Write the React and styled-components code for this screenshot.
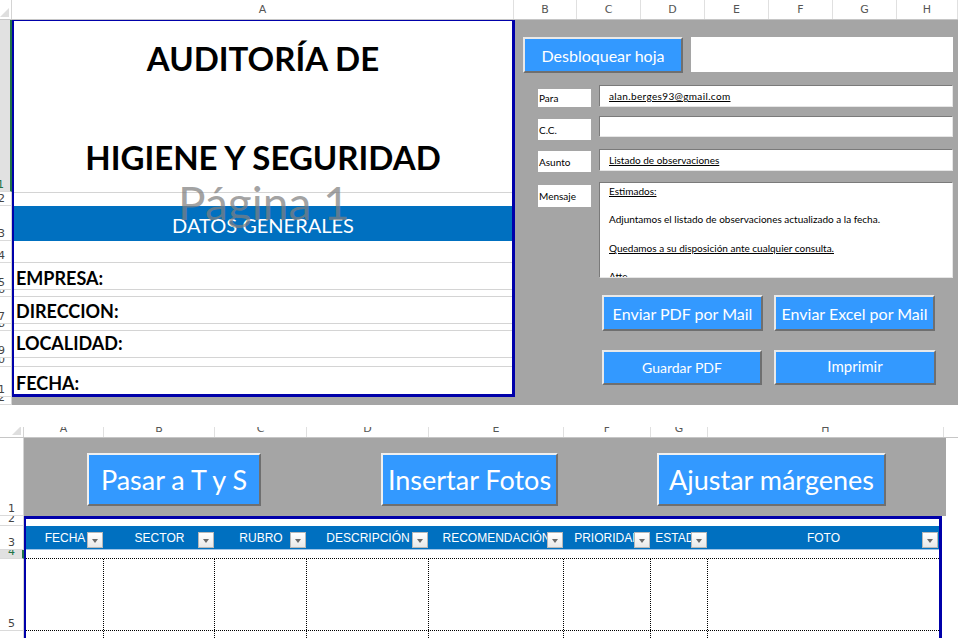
import React from "react";
import styled, { createGlobalStyle } from "styled-components";

const GlobalStyle = createGlobalStyle`
  html, body {
    margin: 0;
    padding: 0;
    background: #fff;
  }
  body {
    font-family: "Lato", "Open Sans", sans-serif;
  }
  * {
    box-sizing: border-box;
  }
`;

const EDGE = "#0000aa";
const GREY = "#a5a5a5";
const HEAD_BLUE = "#0070c0";
const BTN_BLUE = "#3399ff";

const topCols = [
  { l: "A", w: 502 },
  { l: "B", w: 63 },
  { l: "C", w: 64 },
  { l: "D", w: 64 },
  { l: "E", w: 64 },
  { l: "F", w: 64 },
  { l: "G", w: 64 },
  { l: "H", w: 61 },
];

const topRows = [
  { n: "1", h: 172, sel: true },
  { n: "2", h: 14 },
  { n: "3", h: 35 },
  { n: "4", h: 22 },
  { n: "5", h: 27 },
  { n: "6", h: 7 },
  { n: "7", h: 27 },
  { n: "8", h: 7 },
  { n: "9", h: 27 },
  { n: "10", h: 9 },
  { n: "11", h: 30 },
  { n: "12", h: 8 },
];

const dataRows = [
  { h: 22 },
  { h: 27, label: "EMPRESA:", pb: 2 },
  { h: 7 },
  { h: 27, label: "DIRECCION:", pb: 3 },
  { h: 7 },
  { h: 27, label: "LOCALIDAD:", pb: 5 },
  { h: 9 },
  { h: 26, label: "FECHA:", pb: 1, last: true },
];

// mail form: row offset from previous row, label offset inside row
const mailRows = [
  { label: "Para", mt: 0, lmt: 4, lh: 18, fh: 22, text: "alan.berges93@gmail.com", ls: 0.35 },
  { label: "C.C.", mt: 9, lmt: 3, lh: 21, fh: 21 },
  { label: "Asunto", mt: 9, lmt: 2, lh: 21, fh: 22, text: "Listado de observaciones" },
];

const bottomCols = [
  { l: "A", w: 80 },
  { l: "B", w: 111 },
  { l: "C", w: 92 },
  { l: "D", w: 122 },
  { l: "E", w: 135 },
  { l: "F", w: 87 },
  { l: "G", w: 57 },
  { l: "H", w: 236 },
];

const tableCols = [
  { t: "FECHA", w: 78 },
  { t: "SECTOR", w: 111 },
  { t: "RUBRO", w: 92 },
  { t: "DESCRIPCIÓN", w: 122 },
  { t: "RECOMENDACIÓN", w: 135 },
  { t: "PRIORIDAD", w: 87 },
  { t: "ESTADO", w: 57 },
  { t: "FOTO", w: 231 },
];

const bottomRows = [
  { n: "1", h: 78 },
  { n: "2", h: 10 },
  { n: "3", h: 24 },
  { n: "4", h: 9, sel: true },
  { n: "5", h: 72 },
  { n: "6", h: 30 },
];

const Page = styled.div`
  width: 958px;
  height: 638px;
  overflow: hidden;
  background: #fff;
  display: flex;
  flex-direction: column;
`;

const Sheet = styled.div`
  display: flex;
  flex-direction: column;
  flex-shrink: 0;
`;

const ColHeads = styled.div`
  display: flex;
  height: ${(p) => p.$h}px;
  background: #fff;
  border-bottom: 1px solid #c6c6c6;
  overflow: hidden;
  flex-shrink: 0;
`;

const Corner = styled.div`
  width: ${(p) => p.$w}px;
  flex-shrink: 0;
  position: relative;
  border-right: 1px solid #d4d4d4;
  &::after {
    content: "";
    position: absolute;
    right: 2px;
    bottom: 2px;
    border-left: 9px solid transparent;
    border-bottom: 9px solid #dedede;
  }
`;

const ColHead = styled.div`
  width: ${(p) => p.$w}px;
  flex-shrink: 0;
  border-right: 1px solid #e0e0e0;
  font-family: "DejaVu Sans", sans-serif;
  font-size: 11px;
  color: #555;
  text-align: center;
  line-height: ${(p) => p.$lh}px;
  margin-top: ${(p) => p.$mt || 0}px;
`;

const Body = styled.div`
  display: flex;
  height: ${(p) => p.$h}px;
  flex-shrink: 0;
  overflow: hidden;
`;

const RowHeads = styled.div`
  width: ${(p) => p.$w}px;
  flex-shrink: 0;
  display: flex;
  flex-direction: column;
  background: #fff;
`;

const RowHead = styled.div`
  height: ${(p) => p.$h}px;
  flex-shrink: 0;
  overflow: hidden;
  display: flex;
  align-items: flex-end;
  justify-content: ${(p) => (p.$left ? "flex-start" : "flex-end")};
  padding: ${(p) => (p.$left ? "0 0 0 8px" : "0 6px 0 0")};
  font-family: "DejaVu Sans", sans-serif;
  font-size: 11px;
  line-height: 13px;
  white-space: nowrap;
  color: ${(p) => (p.$sel ? "#217346" : "#444")};
  background: ${(p) => (p.$sel ? "#e1e1e1" : "#fff")};
  border-bottom: 1px solid #dadada;
  border-right: ${(p) => (p.$sel ? "2px solid #217346" : "1px solid #d4d4d4")};
`;

/* ---------- report (column A) ---------- */

const SheetArea = styled.div`
  flex: 1;
  display: flex;
  align-items: flex-start;
  background: ${GREY};
`;

const Report = styled.div`
  position: relative;
  width: 503px;
  height: 377px;
  flex-shrink: 0;
  background: #fff;
  border-top: 1px solid ${EDGE};
  border-left: 2px solid ${EDGE};
  border-right: 3px solid ${EDGE};
  border-bottom: 3px solid ${EDGE};
  display: flex;
  flex-direction: column;
`;

const TitleBlock = styled.div`
  height: 172px;
  border-bottom: 1px solid #d4d4d4;
  padding-top: 17px;
  text-align: center;
  flex-shrink: 0;
`;

const TitleLine = styled.div`
  font-weight: 700;
  font-size: 33px;
  line-height: 40px;
  color: #000;
  margin-top: ${(p) => p.$mt || 0}px;
  white-space: nowrap;
`;

const Spacer = styled.div`
  height: ${(p) => p.$h}px;
  flex-shrink: 0;
`;

const BlueBar = styled.div`
  height: 35px;
  flex-shrink: 0;
  background: ${HEAD_BLUE};
  color: #fff;
  font-size: 20px;
  line-height: 20px;
  text-align: center;
  display: flex;
  align-items: flex-end;
  justify-content: center;
  padding-bottom: 6px;
`;

const DataRow = styled.div`
  height: ${(p) => p.$h}px;
  flex-shrink: 0;
  border-bottom: ${(p) => (p.$last ? "none" : "1px solid #d4d4d4")};
  display: flex;
  align-items: flex-end;
  padding: 0 0 ${(p) => p.$pb || 0}px 2px;
  font-weight: 700;
  font-size: 18px;
  line-height: 18px;
  color: #000;
`;

const Watermark = styled.div`
  position: absolute;
  left: 164px;
  top: 156px;
  font-size: 46px;
  line-height: 52px;
  color: rgba(128, 128, 128, 0.72);
  white-space: nowrap;
  pointer-events: none;
`;

/* ---------- control panel ---------- */

const Controls = styled.div`
  flex: 1;
  display: flex;
  flex-direction: column;
  padding: 17px 0 0 8px;
`;

const TopLine = styled.div`
  display: flex;
  gap: 8px;
  align-items: flex-start;
`;

const RaisedButton = styled.div`
  width: ${(p) => p.$w}px;
  height: ${(p) => p.$h}px;
  background: ${BTN_BLUE};
  color: #fff;
  font-size: ${(p) => p.$fs}px;
  display: flex;
  align-items: center;
  justify-content: center;
  white-space: nowrap;
  border: 2px solid;
  border-color: #e9e9e9 #6f6f6f #6f6f6f #e9e9e9;
  padding-bottom: ${(p) => p.$pb || 0}px;
`;

const BlankBox = styled.div`
  width: 262px;
  height: 35px;
  background: #fff;
`;

const Form = styled.div`
  display: flex;
  flex-direction: column;
  margin: 12px 0 0 15px;
`;

const FormRow = styled.div`
  display: flex;
  align-items: flex-start;
  gap: 8px;
  margin-top: ${(p) => p.$mt}px;
`;

const FieldLabel = styled.div`
  width: 53px;
  height: ${(p) => p.$h}px;
  margin-top: ${(p) => p.$mt}px;
  background: #fff;
  font-size: 10px;
  color: #000;
  display: flex;
  align-items: center;
  padding-left: 1px;
`;

const Field = styled.div`
  width: 354px;
  height: ${(p) => p.$h}px;
  background: #fff;
  border: 1px solid;
  border-color: #7a7a7a #e6e6e6 #e6e6e6 #7a7a7a;
  font-size: 10px;
  color: #000;
  padding: ${(p) => (p.$multi ? "1px 0 0 9px" : "0 0 0 9px")};
  display: flex;
  flex-direction: column;
  justify-content: ${(p) => (p.$multi ? "flex-start" : "center")};
  overflow: hidden;
`;

const FieldText = styled.span`
  text-decoration: ${(p) => (p.$u ? "underline" : "none")};
  letter-spacing: ${(p) => p.$ls || 0}px;
  line-height: 14.2px;
  min-height: 14.2px;
  flex-shrink: 0;
  white-space: nowrap;
`;

const ButtonGrid = styled.div`
  display: grid;
  grid-template-columns: 161px 161px;
  column-gap: 11px;
  row-gap: 19px;
  margin: 17px 0 0 79px;
`;

/* ---------- bottom sheet ---------- */

const BottomArea = styled.div`
  flex: 1;
  display: flex;
  flex-direction: column;
`;

const ButtonBand = styled.div`
  width: 922px;
  height: 78px;
  flex-shrink: 0;
  background: ${GREY};
  display: flex;
  align-items: flex-start;
  padding-top: 15px;
`;

const BigButton = styled(RaisedButton)`
  margin-left: ${(p) => p.$ml}px;
  font-size: 27px;
  border-color: #f0f0f0 #6f6f6f #6f6f6f #f0f0f0;
`;

const Table = styled.div`
  width: 918px;
  flex: 1;
  border-top: 3px solid ${EDGE};
  border-left: 2px solid ${EDGE};
  border-right: 3px solid ${EDGE};
  display: flex;
  flex-direction: column;
  background: #fff;
`;

const HeaderRow = styled.div`
  display: flex;
  height: 24px;
  margin-top: 7px;
  background: ${HEAD_BLUE};
  border-bottom: 1px solid #9dc3e6;
  flex-shrink: 0;
`;

const HeaderCell = styled.div`
  position: relative;
  width: ${(p) => p.$w}px;
  flex-shrink: 0;
  color: #fff;
  font-family: "Liberation Sans", Arial, sans-serif;
  font-size: 12px;
  line-height: 24px;
  text-align: center;
  white-space: nowrap;
  overflow: hidden;
`;

const Dropdown = styled.div`
  position: absolute;
  right: 1px;
  bottom: 1px;
  width: 16px;
  height: 16px;
  background: linear-gradient(#ffffff, #e8e8e8);
  border: 1px solid #b8b8b8;
  &::after {
    content: "";
    position: absolute;
    left: 4px;
    top: 6px;
    border-left: 3.5px solid transparent;
    border-right: 3.5px solid transparent;
    border-top: 4px solid #6a6a6a;
  }
`;

const GridRow = styled.div`
  display: flex;
  height: ${(p) => p.$h}px;
  flex-shrink: 0;
  border-bottom: 1px dotted #000;
`;

const GridCell = styled.div`
  width: ${(p) => p.$w}px;
  flex-shrink: 0;
  border-right: ${(p) => (p.$last ? "none" : "1px dotted #000")};
`;

export default function App() {
  return (
    <>
      <GlobalStyle />
      <Page>
        <Sheet>
          <ColHeads $h={20}>
            <Corner $w={12} />
            {topCols.map((c) => (
              <ColHead key={c.l} $w={c.w} $lh={19}>
                {c.l}
              </ColHead>
            ))}
          </ColHeads>
          <Body $h={385}>
            <RowHeads $w={12}>
              {topRows.map((r) => (
                <RowHead key={r.n} $h={r.h} $sel={r.sel}>
                  {r.n}
                </RowHead>
              ))}
            </RowHeads>
            <SheetArea>
              <Report>
                <TitleBlock>
                  <TitleLine>AUDITORÍA DE</TitleLine>
                  <TitleLine $mt={59}>HIGIENE Y SEGURIDAD</TitleLine>
                </TitleBlock>
                <Spacer $h={13} />
                <BlueBar>DATOS GENERALES</BlueBar>
                {dataRows.map((r, i) => (
                  <DataRow key={i} $h={r.h} $pb={r.pb} $last={r.last}>
                    {r.label}
                  </DataRow>
                ))}
                <Watermark>Página 1</Watermark>
              </Report>
              <Controls>
                <TopLine>
                  <RaisedButton $w={160} $h={36} $fs={16}>
                    Desbloquear hoja
                  </RaisedButton>
                  <BlankBox />
                </TopLine>
                <Form>
                  {mailRows.map((r) => (
                    <FormRow key={r.label} $mt={r.mt}>
                      <FieldLabel $mt={r.lmt} $h={r.lh}>
                        {r.label}
                      </FieldLabel>
                      <Field $h={r.fh}>
                        {r.text && (
                          <FieldText $u $ls={r.ls}>
                            {r.text}
                          </FieldText>
                        )}
                      </Field>
                    </FormRow>
                  ))}
                  <FormRow $mt={10}>
                    <FieldLabel $mt={3} $h={22}>
                      Mensaje
                    </FieldLabel>
                    <Field $h={96} $multi>
                      <FieldText $u>Estimados:</FieldText>
                      <FieldText />
                      <FieldText>Adjuntamos el listado de observaciones actualizado a la fecha.</FieldText>
                      <FieldText />
                      <FieldText $u>Quedamos a su disposición ante cualquier consulta.</FieldText>
                      <FieldText />
                      <FieldText>Atte</FieldText>
                    </Field>
                  </FormRow>
                </Form>
                <ButtonGrid>
                  <RaisedButton $w={161} $h={36} $fs={16}>
                    Enviar PDF por Mail
                  </RaisedButton>
                  <RaisedButton $w={161} $h={36} $fs={16}>
                    Enviar Excel por Mail
                  </RaisedButton>
                  <RaisedButton $w={160} $h={35} $fs={14}>
                    Guardar PDF
                  </RaisedButton>
                  <RaisedButton $w={162} $h={35} $fs={15} $pb={3}>
                    Imprimir
                  </RaisedButton>
                </ButtonGrid>
              </Controls>
            </SheetArea>
          </Body>
        </Sheet>

        <Spacer $h={22} />

        <Sheet>
          <ColHeads $h={11}>
            <Corner $w={24} />
            {bottomCols.map((c) => (
              <ColHead key={c.l} $w={c.w} $lh={12} $mt={-4}>
                {c.l}
              </ColHead>
            ))}
          </ColHeads>
          <Body $h={200}>
            <RowHeads $w={24}>
              {bottomRows.map((r) => (
                <RowHead key={r.n} $h={r.h} $sel={r.sel} $left>
                  {r.n}
                </RowHead>
              ))}
            </RowHeads>
            <BottomArea>
              <ButtonBand>
                <BigButton $w={174} $h={53} $ml={63}>
                  Pasar a T y S
                </BigButton>
                <BigButton $w={177} $h={53} $ml={120}>
                  Insertar Fotos
                </BigButton>
                <BigButton $w={229} $h={53} $ml={99}>
                  Ajustar márgenes
                </BigButton>
              </ButtonBand>
              <Table>
                <HeaderRow>
                  {tableCols.map((c) => (
                    <HeaderCell key={c.t} $w={c.w}>
                      {c.t}
                      <Dropdown />
                    </HeaderCell>
                  ))}
                </HeaderRow>
                <GridRow $h={9} />
                <GridRow $h={72}>
                  {tableCols.map((c, i) => (
                    <GridCell key={c.t} $w={c.w} $last={i === tableCols.length - 1} />
                  ))}
                </GridRow>
                <GridRow $h={40}>
                  {tableCols.map((c, i) => (
                    <GridCell key={c.t} $w={c.w} $last={i === tableCols.length - 1} />
                  ))}
                </GridRow>
              </Table>
            </BottomArea>
          </Body>
        </Sheet>
      </Page>
    </>
  );
}
